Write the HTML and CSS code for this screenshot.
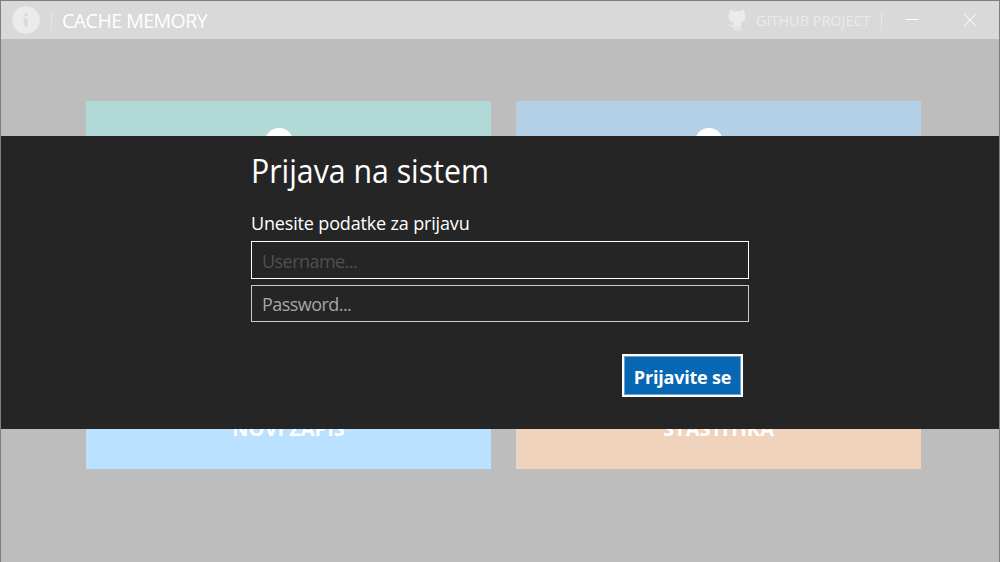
FILE: index.html
```html
<!DOCTYPE html>
<html lang="sr">
<head>
<meta charset="utf-8">
<title>Cache Memory</title>
<link rel="stylesheet" href="styles.css">
</head>
<body>
<div class="window">
  <header class="titlebar">
    <svg class="info" viewBox="0 0 28 28"><circle cx="14" cy="14" r="13.7" fill="#ebebeb"/><path d="M12.3 7.2h3.2v2.900h-3.200zM11.300 12.200h4.200v8.800h-3.200v-6.600h-1z" fill="#d9d9d9"/></svg>
    <span class="divider"></span>
    <h1 class="app-name">CACHE MEMORY</h1>
    <svg class="github" viewBox="0 0 24 24"><path d="M4.200 1C5.500 .700 7 1.700 8.400 2.700Q12 1.900 15.600 2.700C17 1.700 18.500 .700 19.800 1Q20.500 3 20 5C21.300 6.500 21.500 9 20.800 11C20 13.500 18 14.700 15.200 15Q16.200 16 16.200 17.700V21.500L17 23H15L14.500 18.500H14V23.500H12.500V18.500H11.500V23.500H10V18.500H9.500L9 23H7L7.800 21.500V19.800C5.300 20.200 4.500 19.100 3.800 17.800Q3.200 17 2 16.400C4.200 16 4.900 17 5.500 17.800Q6.300 18.700 7.800 18.200Q7.900 16 8.800 15C6 14.700 4 13.500 3.200 11C2.500 9 2.700 6.500 4 5Q3.500 3 4.200 1Z" fill="#ebebeb"/></svg>
    <span class="github-label">GITHUB PROJECT</span>
    <span class="divider"></span>
    <svg class="minimize" viewBox="0 0 12 12" shape-rendering="crispEdges"><path d="M0 5.500H12" stroke="#fff"/></svg>
    <svg class="close" viewBox="0 0 12 12"><path d="M.3 .3L11.700 11.700M11.700 .3L.3 11.700" stroke="#fff" stroke-width="1"/></svg>
  </header>
  <main class="tiles">
    <section class="tile teal"><span class="tile-dot"></span></section>
    <section class="tile blue"><span class="tile-dot"></span></section>
    <section class="tile sky"><span class="tile-name">NOVI ZAPIS</span></section>
    <section class="tile peach"><span class="tile-name">STASTITIKA</span></section>
  </main>
  <div class="dialog">
    <form class="login">
      <h2 class="title">Prijava na sistem</h2>
      <p class="message">Unesite podatke za prijavu</p>
      <div class="field username"><span>Username...</span></div>
      <div class="field password"><span>Password...</span></div>
      <button class="submit" type="button"><span>Prijavite se</span></button>
    </form>
  </div>
</div>
</body>
</html>
```
FILE: styles.css
```css
* { box-sizing: border-box; }
body { margin: 0; font-family: "Open Sans", "Noto Sans", sans-serif; }
h1, h2, p { margin: 0; font-weight: 400; white-space: nowrap; }
svg { display: block; flex: none; }

.window {
  position: relative;
  height: 562px;
  overflow: hidden;
  background: #bdbdbd;
  border: 1px solid #7f7f7f;
  border-bottom: 0;
}

.titlebar {
  display: flex;
  align-items: center;
  height: 38px;
  padding-left: 11px;
  background: #d9d9d9;
}
.info { width: 28px; height: 28px; }
.divider { width: 1px; height: 19px; margin-left: 11px; background: #e6e6e6; }
.app-name { margin-left: 10px; width: 148px; font-size: 19.5px; line-height: 28px; letter-spacing: -0.5px; color: #fff; font-weight: 400; padding-top: 1px; }
.github { width: 22px; height: 22px; margin-left: 516px; }
.github-label { width: 115px; margin-left: 8px; font-size: 14.5px; letter-spacing: -0.04px; color: #ebebeb; white-space: nowrap; padding-top: 1px; }
.titlebar .github-label + .divider { margin-left: 10px; }
.minimize { width: 12px; height: 12px; margin-left: 24px; }
.close { width: 12px; height: 12px; margin-left: 46px; }

.tiles {
  display: grid;
  grid-template-columns: 405px 405px;
  grid-template-rows: 171px 172px;
  gap: 25px;
  padding: 62px 0 0 85px;
}
.tile { display: flex; justify-content: center; padding-right: 20px; }
.teal { background: #b1d9d7; }
.blue { background: #b3d0e7; }
.sky { background: #bae1ff; }
.peach { background: #f0d3bc; }
.tile-dot { width: 28px; height: 28px; margin-top: 27px; border-radius: 50%; background: #fff; }
.tile.sky, .tile.peach { align-items: flex-end; padding: 0 0 26px; }
.tile-name { font-size: 20px; line-height: 28px; font-weight: 700; color: #fff; white-space: nowrap; }

.dialog {
  position: absolute;
  top: 135px;
  left: 0;
  right: 0;
  height: 293px;
  background: #252525;
}
.login { display: flex; flex-direction: column; width: 498px; margin-left: 250px; padding-top: 11px; color: #fff; }
.title { height: 48px; font-size: 33px; line-height: 48px; transform: scaleX(0.917); transform-origin: left; }
.message { height: 26px; margin-top: 15px; font-size: 18px; line-height: 26px; letter-spacing: -0.16px; }
.field { display: flex; align-items: center; padding-left: 10px; font-size: 18px; letter-spacing: -0.55px; border: 1px solid; }
.username { height: 38px; margin-top: 5px; border-color: #fff; color: #505050; padding-top: 2px; }
.password { height: 37px; margin-top: 6px; border-color: #ccc; color: #a6a6a6; }
.submit {
  display: flex;
  align-items: center;
  justify-content: center;
  align-self: flex-end;
  width: 121px;
  height: 43px;
  margin: 32px 6px 0 0;
  padding: 2px 0 0;
  border: 2px solid #fff;
  background: #0767b3;
  box-shadow: inset 0 0 0 1px #6aa4d1;
  color: #fff;
  font: 700 18px "Open Sans", "Noto Sans", sans-serif;
  letter-spacing: -0.2px;
  white-space: nowrap;
}
```
